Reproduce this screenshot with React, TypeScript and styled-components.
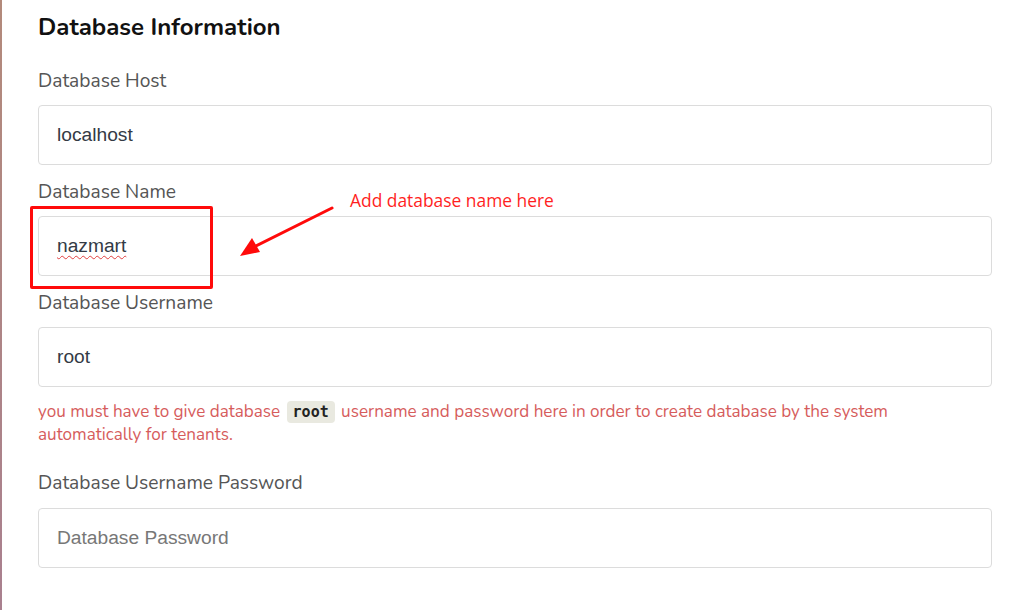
import React from "react";
import styled, { createGlobalStyle } from "styled-components";

const Global = createGlobalStyle`
  html, body { margin: 0; padding: 0; background: #ffffff; }
  body { width: 1024px; height: 610px; overflow: hidden; }
`;

const Page = styled.div`
  position: relative;
  width: 1024px;
  height: 610px;
  box-sizing: border-box;
  padding: 12px 32px 0 38px;
  background: #fff;
  &::before {
    content: "";
    position: absolute;
    left: 0;
    top: 0;
    bottom: 0;
    width: 2px;
    background: linear-gradient(#b38a7b, #a9808f);
  }
`;

const Heading = styled.h2`
  margin: 0 0 23.5px;
  font-family: "Nunito", "Lato", "Noto Sans", sans-serif;
  font-weight: 700;
  font-size: 24px;
  line-height: 30px;
  color: #111;
`;

const Form = styled.div`
  display: flex;
  flex-direction: column;
  gap: 11.5px;
  width: 954px;
`;

const Group = styled.div<{ $spaced?: boolean }>`
  display: flex;
  flex-direction: column;
  margin-top: ${(p) => (p.$spaced ? "11px" : "0")};
`;

const Label = styled.label`
  font-family: "Nunito", "Lato", "Noto Sans", sans-serif;
  font-size: 19.2px;
  line-height: 30px;
  color: #555;
  margin-bottom: 9.5px;
`;

const InputBox = styled.div<{ $placeholder?: boolean }>`
  box-sizing: border-box;
  height: 60px;
  border: 1px solid #dcdcdc;
  border-radius: 4px;
  padding: 0 18px;
  display: flex;
  align-items: center;
  font-family: "Liberation Sans", Arial, sans-serif;
  font-size: 19.2px;
  color: ${(p) => (p.$placeholder ? "#777" : "#333a45")};
`;

const Misspelled = styled.span`
  text-decoration: underline wavy #e04040;
  text-decoration-thickness: 1px;
  text-underline-offset: 3px;
`;

const Note = styled.p`
  margin: 12.5px 0 0;
  max-width: 870px;
  font-family: "Nunito", "Lato", "Noto Sans", sans-serif;
  font-size: 17.1px;
  line-height: 23px;
  color: #d65c5c;
`;

const Code = styled.code`
  display: inline-block;
  font-family: "DejaVu Sans Mono", "Liberation Mono", monospace;
  font-weight: 700;
  font-size: 15px;
  line-height: 20px;
  color: #222;
  background: #e9e9e0;
  border-radius: 4px;
  padding: 1px 6px;
  margin: 0 2px;
`;

const Highlight = styled.div`
  position: absolute;
  left: 30px;
  top: 206px;
  width: 183px;
  height: 83px;
  box-sizing: border-box;
  border: 3px solid #ff0a0a;
  border-radius: 2px;
`;

const Callout = styled.div`
  position: absolute;
  left: 350px;
  top: 188px;
  font-family: "Open Sans", "Noto Sans", sans-serif;
  font-size: 17.4px;
  line-height: 24px;
  color: #ff1f1f;
`;

const Arrow = styled.svg`
  position: absolute;
  left: 230px;
  top: 200px;
`;

export default function App() {
  return (
    <>
      <Global />
      <Page>
        <Heading>Database Information</Heading>
        <Form>
          <Group>
            <Label>Database Host</Label>
            <InputBox>localhost</InputBox>
          </Group>
          <Group>
            <Label>Database Name</Label>
            <InputBox>
              <Misspelled>nazmart</Misspelled>
            </InputBox>
          </Group>
          <Group>
            <Label>Database Username</Label>
            <InputBox>root</InputBox>
            <Note>
              you must have to give database <Code>root</Code> username and password here in order to create
              database by the system automatically for tenants.
            </Note>
          </Group>
          <Group $spaced>
            <Label>Database Username Password</Label>
            <InputBox $placeholder>Database Password</InputBox>
          </Group>
        </Form>
        <Highlight />
        <Callout>Add database name here</Callout>
        <Arrow width="110" height="64" viewBox="0 0 110 64">
          <line x1="102" y1="8" x2="24" y2="47" stroke="#ff0a0a" strokeWidth="3" strokeLinecap="round" />
          <polygon points="10,56 22,38 30,52" fill="#ff0a0a" />
        </Arrow>
      </Page>
    </>
  );
}
